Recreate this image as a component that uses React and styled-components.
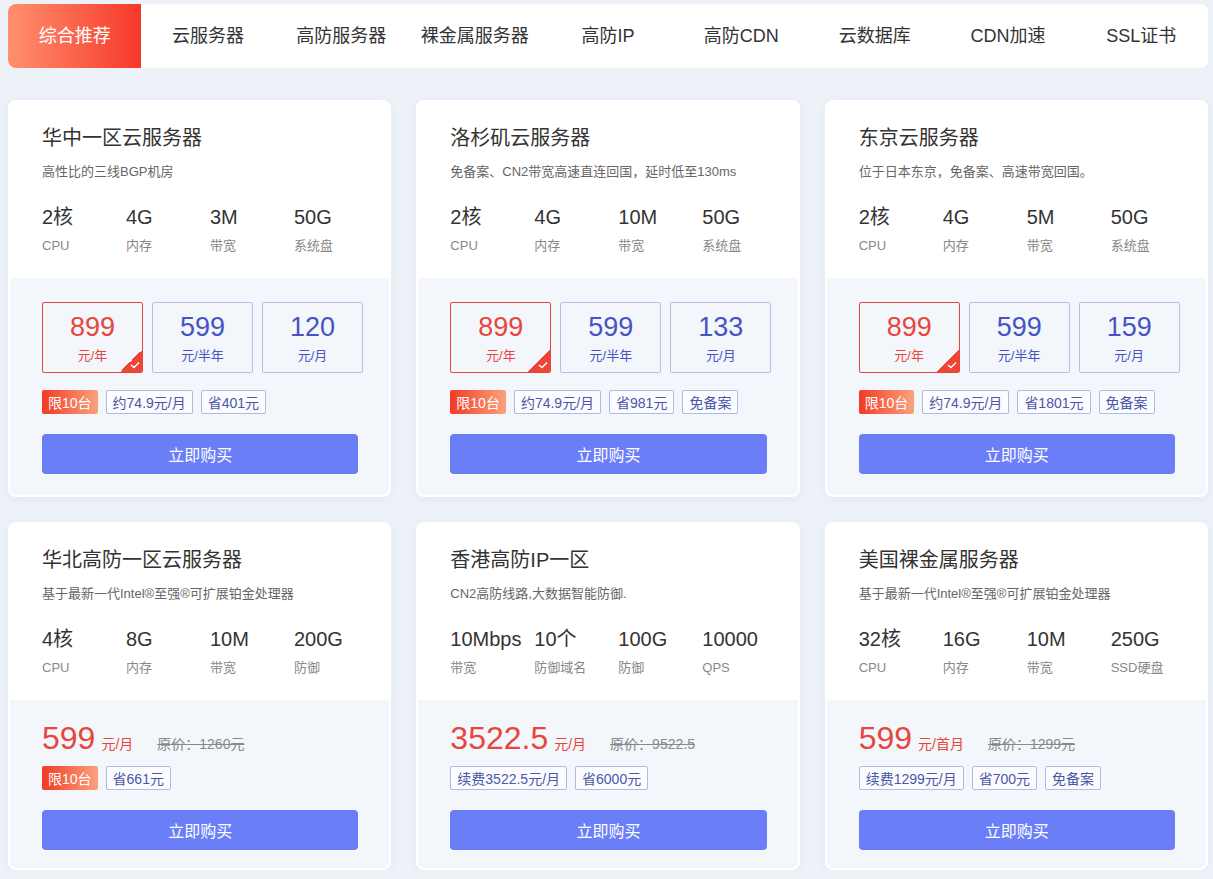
import React, { useState } from "react";
import styled, { createGlobalStyle } from "styled-components";

const GlobalStyle = createGlobalStyle`
  body {
    margin: 0;
    background: #edf1f8;
    font-family: "Liberation Sans", "Noto Sans CJK SC", sans-serif;
    color: #333;
  }
`;

const tabs = [
  "综合推荐",
  "云服务器",
  "高防服务器",
  "裸金属服务器",
  "高防IP",
  "高防CDN",
  "云数据库",
  "CDN加速",
  "SSL证书",
];

const products = [
  {
    title: "华中一区云服务器",
    desc: "高性比的三线BGP机房",
    specs: [
      ["2核", "CPU"],
      ["4G", "内存"],
      ["3M", "带宽"],
      ["50G", "系统盘"],
    ],
    plans: [
      ["899", "元/年"],
      ["599", "元/半年"],
      ["120", "元/月"],
    ],
    hot: "限10台",
    tags: ["约74.9元/月", "省401元"],
  },
  {
    title: "洛杉矶云服务器",
    desc: "免备案、CN2带宽高速直连回国，延时低至130ms",
    specs: [
      ["2核", "CPU"],
      ["4G", "内存"],
      ["10M", "带宽"],
      ["50G", "系统盘"],
    ],
    plans: [
      ["899", "元/年"],
      ["599", "元/半年"],
      ["133", "元/月"],
    ],
    hot: "限10台",
    tags: ["约74.9元/月", "省981元", "免备案"],
  },
  {
    title: "东京云服务器",
    desc: "位于日本东京，免备案、高速带宽回国。",
    specs: [
      ["2核", "CPU"],
      ["4G", "内存"],
      ["5M", "带宽"],
      ["50G", "系统盘"],
    ],
    plans: [
      ["899", "元/年"],
      ["599", "元/半年"],
      ["159", "元/月"],
    ],
    hot: "限10台",
    tags: ["约74.9元/月", "省1801元", "免备案"],
  },
  {
    title: "华北高防一区云服务器",
    desc: "基于最新一代Intel®至强®可扩展铂金处理器",
    specs: [
      ["4核", "CPU"],
      ["8G", "内存"],
      ["10M", "带宽"],
      ["200G", "防御"],
    ],
    price: "599",
    unit: "元/月",
    original: "原价：1260元",
    hot: "限10台",
    tags: ["省661元"],
  },
  {
    title: "香港高防IP一区",
    desc: "CN2高防线路,大数据智能防御.",
    specs: [
      ["10Mbps", "带宽"],
      ["10个", "防御域名"],
      ["100G", "防御"],
      ["10000", "QPS"],
    ],
    price: "3522.5",
    unit: "元/月",
    original: "原价：9522.5",
    tags: ["续费3522.5元/月", "省6000元"],
  },
  {
    title: "美国裸金属服务器",
    desc: "基于最新一代Intel®至强®可扩展铂金处理器",
    specs: [
      ["32核", "CPU"],
      ["16G", "内存"],
      ["10M", "带宽"],
      ["250G", "SSD硬盘"],
    ],
    price: "599",
    unit: "元/首月",
    original: "原价：1299元",
    tags: ["续费1299元/月", "省700元", "免备案"],
  },
];

const PlanPicker = ({ plans }) => {
  const [active, setActive] = useState(0);
  return (
    <Plans>
      {plans.map(([num, unit], i) => (
        <Plan key={i} $active={active === i} onClick={() => setActive(i)}>
          <PlanNum>{num}</PlanNum>
          <PlanUnit>{unit}</PlanUnit>
          {active === i && (
            <Corner>
              <svg width="10" height="8" viewBox="0 0 10 8">
                <path
                  d="M1 4 L4 6.5 L9 1.5"
                  fill="none"
                  stroke="#fff"
                  strokeWidth="1.4"
                />
              </svg>
            </Corner>
          )}
        </Plan>
      ))}
    </Plans>
  );
};

const ProductCard = ({ item }) => (
  <Card>
    <Top>
      <Title>{item.title}</Title>
      <Desc>{item.desc}</Desc>
      <Specs>
        {item.specs.map(([value, label]) => (
          <Spec key={label}>
            <SpecValue>{value}</SpecValue>
            <SpecLabel>{label}</SpecLabel>
          </Spec>
        ))}
      </Specs>
    </Top>
    <Bottom $compact={!item.plans}>
      {item.plans ? (
        <PlanPicker plans={item.plans} />
      ) : (
        <PriceRow>
          <Price>{item.price}</Price>
          <PriceUnit>{item.unit}</PriceUnit>
          <Original>{item.original}</Original>
        </PriceRow>
      )}
      <Tags $compact={!item.plans}>
        {item.hot && <HotTag>{item.hot}</HotTag>}
        {item.tags.map((t) => (
          <Tag key={t}>{t}</Tag>
        ))}
      </Tags>
      <BuyButton>立即购买</BuyButton>
    </Bottom>
  </Card>
);

const App = () => {
  const [tab, setTab] = useState(0);
  return (
    <>
      <GlobalStyle />
      <Page>
        <TabBar>
          {tabs.map((t, i) => (
            <TabItem key={t} $active={tab === i} onClick={() => setTab(i)}>
              {t}
            </TabItem>
          ))}
        </TabBar>
        <Grid>
          {products.map((p) => (
            <ProductCard key={p.title} item={p} />
          ))}
        </Grid>
      </Page>
    </>
  );
};

const Page = styled.div`
  width: 1200px;
  padding: 4px 0 0 8px;
`;

const TabBar = styled.div`
  display: grid;
  grid-template-columns: repeat(9, minmax(0, 1fr));
  height: 64px;
  background: #fff;
  border-radius: 8px;
`;

const TabItem = styled.div`
  display: flex;
  align-items: center;
  justify-content: center;
  font-size: 18px;
  line-height: 24px;
  color: ${(p) => (p.$active ? "#fff" : "#333")};
  background: ${(p) =>
    p.$active ? "linear-gradient(90deg, #ff906e 0%, #f7382a 100%)" : "none"};
  border-radius: ${(p) => (p.$active ? "8px 0 0 8px" : "0")};
  cursor: pointer;
`;

const Grid = styled.div`
  display: grid;
  grid-template-columns: repeat(3, minmax(0, 1fr));
  column-gap: 25px;
  row-gap: 25px;
  margin-top: 32px;
`;

const Card = styled.div`
  background: #fff;
  border-radius: 8px;
  padding: 2px;
  box-shadow: 0 2px 10px rgba(120, 140, 190, 0.08);
`;

const Top = styled.div`
  padding: 22px 31px 22px 32px;
`;

const Title = styled.div`
  font-size: 20px;
  line-height: 28px;
  color: #333;
`;

const Desc = styled.div`
  margin-top: 10px;
  font-size: 13px;
  line-height: 20px;
  color: #666;
`;

const Specs = styled.div`
  display: grid;
  grid-template-columns: repeat(3, 84px) minmax(0, 1fr);
  margin-top: 21px;
`;

const Spec = styled.div`
  display: flex;
  flex-direction: column;
`;

const SpecValue = styled.div`
  font-size: 20px;
  line-height: 28px;
  color: #333;
  white-space: nowrap;
`;

const SpecLabel = styled.div`
  margin-top: 5px;
  font-size: 13px;
  line-height: 20px;
  color: #888;
  white-space: nowrap;
`;

const Bottom = styled.div`
  background: #f3f6fb;
  border-radius: 0 0 6px 6px;
  padding: ${(p) => (p.$compact ? "20px 31px 18px 32px" : "24px 31px 21px 32px")};
`;

const Plans = styled.div`
  display: flex;
  gap: 9px;
`;

const Plan = styled.div`
  position: relative;
  flex: 0 0 101px;
  height: 71px;
  box-sizing: border-box;
  border: 1px solid ${(p) => (p.$active ? "#e2463b" : "#b8bfe6")};
  border-radius: 2px;
  display: flex;
  flex-direction: column;
  align-items: center;
  justify-content: center;
  color: ${(p) => (p.$active ? "#e8453c" : "#4653c2")};
  overflow: hidden;
  cursor: pointer;
`;

const PlanNum = styled.div`
  font-size: 27px;
  line-height: 32px;
`;

const PlanUnit = styled.div`
  margin-top: 4px;
  font-size: 13px;
  line-height: 18px;
`;

const Corner = styled.div`
  position: absolute;
  right: 0;
  bottom: 0;
  width: 22px;
  height: 22px;
  background: linear-gradient(135deg, transparent 50%, #ee4636 50%);
  display: flex;
  align-items: flex-end;
  justify-content: flex-end;
  padding: 0 2px 3px 0;
  box-sizing: border-box;
`;

const PriceRow = styled.div`
  display: flex;
  align-items: baseline;
  height: 40px;
`;

const Price = styled.span`
  font-size: 32px;
  color: #e8453c;
`;

const PriceUnit = styled.span`
  margin-left: 6px;
  font-size: 14px;
  color: #e8453c;
`;

const Original = styled.span`
  margin-left: 24px;
  font-size: 14px;
  color: #888;
  text-decoration: line-through;
`;

const Tags = styled.div`
  display: flex;
  gap: 8px;
  margin-top: ${(p) => (p.$compact ? "6px" : "17px")};
`;

const TagBase = styled.span`
  height: 24px;
  box-sizing: border-box;
  padding: 0 6px;
  display: inline-flex;
  align-items: center;
  font-size: 14px;
  border-radius: 2px;
  white-space: nowrap;
`;

const Tag = styled(TagBase)`
  border: 1px solid #b3badf;
  background: #fbfcff;
  color: #4b56a6;
`;

const HotTag = styled(TagBase)`
  color: #fff;
  background: linear-gradient(90deg, #f23b24 0%, #fba27f 100%);
`;

const BuyButton = styled.button`
  display: block;
  width: 100%;
  height: 40px;
  margin-top: 20px;
  border: none;
  border-radius: 4px;
  background: #6a7ef8;
  color: #fff;
  font-family: inherit;
  font-size: 16px;
  cursor: pointer;
`;

export default App;
